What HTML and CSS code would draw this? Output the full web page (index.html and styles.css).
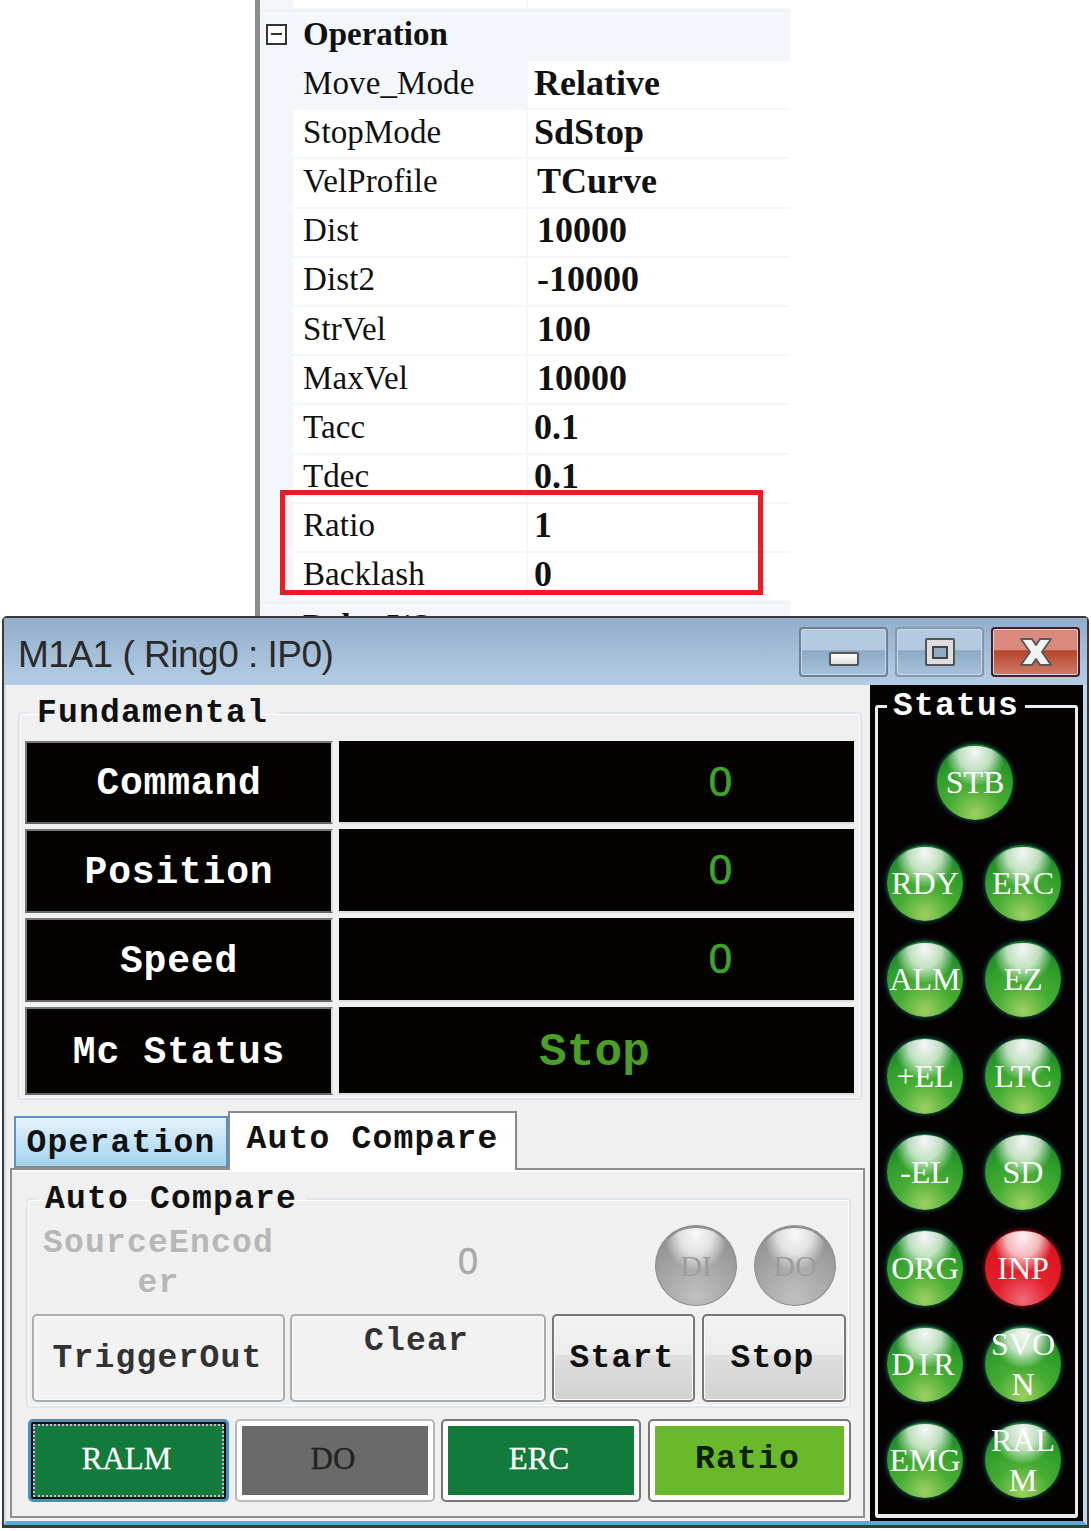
FILE: index.html
```html
<!DOCTYPE html>
<html lang="en">
<head>
<meta charset="utf-8">
<title>M1A1</title>
<link rel="stylesheet" href="styles.css">
</head>
<body>
<section class="props">
  <div class="grid">
    <div class="row stub"><span class="name"></span><span class="val"></span></div>
    <div class="row group"><span class="expander"></span><span class="gname">Operation</span></div>
    <div class="row sel"><span class="name">Move_Mode</span><span class="val">Relative</span></div>
    <div class="row"><span class="name">StopMode</span><span class="val">SdStop</span></div>
    <div class="row"><span class="name">VelProfile</span><span class="val in">TCurve</span></div>
    <div class="row"><span class="name">Dist</span><span class="val in">10000</span></div>
    <div class="row"><span class="name">Dist2</span><span class="val in">-10000</span></div>
    <div class="row"><span class="name">StrVel</span><span class="val in">100</span></div>
    <div class="row"><span class="name">MaxVel</span><span class="val in">10000</span></div>
    <div class="row"><span class="name">Tacc</span><span class="val">0.1</span></div>
    <div class="row"><span class="name">Tdec</span><span class="val">0.1</span></div>
    <div class="row"><span class="name">Ratio</span><span class="val">1</span></div>
    <div class="row"><span class="name">Backlash</span><span class="val">0</span></div>
    <div class="row group next"><span class="gname">Pulse I/O</span></div>
  </div>
  <div class="redbox"></div>
</section>

<section class="window">
  <header class="titlebar">
    <h1 class="title">M1A1 ( Ring0 : IP0)</h1>
    <div class="controls">
      <div class="ctl"><span class="min-ico"></span></div>
      <div class="ctl"><span class="max-ico"></span></div>
      <div class="ctl close">
        <svg width="36" height="32" viewBox="0 0 36 32"><path d="M3 3h11l4 6 4-6h11L24 16l9 13H22l-4-6-4 6H3l9-13z" fill="#f2f2f2" stroke="#5a5a5a" stroke-width="2" stroke-linejoin="round"/></svg>
      </div>
    </div>
  </header>
  <div class="client">
    <div class="left">
      <fieldset class="fund">
        <legend>Fundamental</legend>
        <div class="readout">
          <div class="rl">Command</div><div class="rv num">0</div>
          <div class="rl">Position</div><div class="rv num">0</div>
          <div class="rl">Speed</div><div class="rv num">0</div>
          <div class="rl">Mc Status</div><div class="rv word">Stop</div>
        </div>
      </fieldset>
      <div class="tabs">
        <div class="tab">Operation</div>
        <div class="tab active">Auto Compare</div>
      </div>
      <div class="panel">
        <fieldset class="compare">
          <legend>Auto Compare</legend>
          <div class="source">
            <div class="srclabel">SourceEncod<br>er</div>
            <div class="srcval">0</div>
            <div class="led gray big">DI</div>
            <div class="led gray big">DO</div>
          </div>
          <div class="actions">
            <div class="btn flat wide">TriggerOut</div>
            <div class="btn flat wide2 top">Clear</div>
            <div class="btn raised start">Start</div>
            <div class="btn raised stop">Stop</div>
          </div>
        </fieldset>
        <div class="toggles">
          <div class="tg focus"><span class="fill green">RALM</span></div>
          <div class="tg"><span class="fill dim">DO</span></div>
          <div class="tg dark"><span class="fill green">ERC</span></div>
          <div class="tg dark wider"><span class="fill lime">Ratio</span></div>
        </div>
      </div>
    </div>
    <div class="status">
      <fieldset class="statusbox">
        <legend>Status</legend>
        <div class="leds">
          <div class="led first">STB</div>
          <div class="led">RDY</div><div class="led">ERC</div>
          <div class="led">ALM</div><div class="led">EZ</div>
          <div class="led">+EL</div><div class="led">LTC</div>
          <div class="led">-EL</div><div class="led">SD</div>
          <div class="led">ORG</div><div class="led red">INP</div>
          <div class="led spaced">DIR</div><div class="led">SVO<br>N</div>
          <div class="led">EMG</div><div class="led">RAL<br>M</div>
        </div>
      </fieldset>
    </div>
  </div>
</section>
</body>
</html>
```
FILE: styles.css
```css
* { box-sizing: border-box; }
html, body { margin: 0; padding: 0; background: #fff; }
body { width: 1091px; height: 1531px; overflow: hidden; }

/* Property grid */
.props { position: relative; height: 616px; overflow: hidden; padding-left: 255px; }
.grid {
  width: 535px; height: 616px;
  border-left: 5px solid #8d8d8d;
  font-family: "Liberation Serif", serif; color: #111;
}
.row {
  display: flex; height: 49.2px; align-items: center;
  padding-left: 33px; background: #f3f6fb;
  font-size: 33px;
}
.stub { height: 10px; }
.stub .name, .stub .val { height: 100%; }
.name {
  width: 235px; height: 100%; flex: none; padding: 0 0 3px 10px; background: #fff;
  border-bottom: 2px solid #f3f6fb; border-right: 2px solid #f3f6fb;
  display: flex; align-items: center; letter-spacing: .1px;
}
.val {
  flex: 1; height: 100%; padding: 0 0 4px 6px; background: #fff; font-weight: bold; font-size: 36px;
  border-bottom: 2px solid #f3f6fb;
  display: flex; align-items: center;
}
.val.in { padding-left: 9px; }
.sel .name { background: #f3f6fb; }
.group { height: 51px; padding: 0 0 5px 6px; border-top: 2px solid #f0f0f0; }
.gname { font-weight: bold; font-size: 33px; }
.group.next { padding-left: 43px; }
.expander {
  width: 21px; height: 21px; border: 2px solid #333; margin-right: 16px; flex: none;
  background: linear-gradient(#333, #333) center / 11px 2px no-repeat #fff;
}
.redbox {
  position: absolute; left: 280px; top: 490px; width: 483px; height: 105px;
  border: 5px solid #ed1c24;
}

/* Window */
.window {
  margin-left: 2px; width: 1087px; height: 912px;
  border: 2px solid #3a3a3a; border-bottom-width: 3px; border-radius: 5px 5px 0 0;
  display: flex; flex-direction: column; background: #b4cce4;
  font-family: "Liberation Mono", monospace;
}
.titlebar {
  height: 67px; flex: none; display: flex; align-items: flex-start; justify-content: space-between;
  background: linear-gradient(#93aecb, #b4cde5); padding: 9px 7px 0 14px;
}
.title {
  margin: 1px 0 0; font: 400 37px/54px "Liberation Sans", sans-serif; color: #2a2a2a; letter-spacing: -.5px;
}
.controls { display: flex; gap: 7px; }
.ctl {
  width: 89px; height: 50px; border: 2px solid #6f8094; border-radius: 4px;
  box-shadow: inset 0 0 0 1px #c8d9ea;
  background: linear-gradient(#b4cae0 0 46%, #8ba8c4 47%, #a8c2dc 100%);
  display: flex; align-items: center; justify-content: center;
}
.ctl:nth-child(2) { border-color: #8397ad; }
.ctl.close {
  border-color: #4e1a24;
  background: linear-gradient(#da8a7c 0 46%, #b5442a 47%, #d07c68 100%);
}
.min-ico {
  width: 30px; height: 14px; margin-top: 14px; background: linear-gradient(#fff, #ddd);
  border: 2px solid #555; border-radius: 2px;
}
.max-ico {
  width: 30px; height: 28px; background: #ddd; border: 2px solid #555; border-radius: 2px;
  display: flex; align-items: center; justify-content: center;
}
.max-ico::after { content: ""; width: 12px; height: 9px; background: #8ea9c6; border: 2px solid #444; }

.client {
  flex: 1; display: flex; background: #f0f0f0; min-height: 0;
  border-left: 2px solid #c9dcee; border-right: 4px solid #bcdcf0; border-bottom: 4px solid #52aed2;
}
.left { width: 864px; flex: none; }

fieldset { margin: 0; padding: 0; min-width: 0; }
legend {
  padding: 0 9px; height: 30px;
  font: bold 33px/32px "Liberation Mono", monospace; letter-spacing: 1.2px; color: #111;
  white-space: pre;
}

.fund {
  width: 844px; height: 402px; margin: 13px 0 0 12px; padding: 13px 6px 0 5px;
  border: 2px solid #dfe5ea; border-radius: 4px; box-shadow: inset 0 0 0 1px #fff;
}
.fund legend { margin-left: 3px; }
.readout {
  display: grid; grid-template-columns: 308px 515px; grid-template-rows: 83px 84px 84px 88px;
  gap: 5px 6px;
}
.rl {
  background: #050202; color: #fff; border: 2px solid #777; border-right-color: #ddd; border-bottom-color: #666;
  display: flex; align-items: center; justify-content: center; padding-top: 2px;
  font-weight: bold; font-size: 38px; letter-spacing: .8px; white-space: pre;
}
.rv { background: #050202; display: flex; align-items: center; border-bottom: 2px solid #ddd; }
.num {
  color: #3fa52a; font: 400 42px "Liberation Sans", sans-serif; -webkit-text-stroke: .6px #3fa52a;
  justify-content: flex-end; padding-right: 122px;
}
.word {
  color: #4b9f24; justify-content: center; padding: 5px 4px 0 0; font: bold 46px "Liberation Mono", monospace; letter-spacing: 0.2px;
}

.tabs { height: 57px; margin-top: 11px; padding-left: 8px; display: flex; align-items: flex-end; }
.tab {
  width: 214px; height: 52px; border: 2px solid #5b8fc0; border-bottom: 2px solid #8a8a8a;
  background: linear-gradient(#e4f2fb, #a4d3ee);
  font: bold 33px/52px "Liberation Mono", monospace; letter-spacing: 1.2px; text-align: center; color: #111; white-space: pre;
}
.tab.active {
  width: 289px; height: 59px; margin-bottom: -2px; position: relative;
  border: 2px solid #8a8a8a; border-bottom: 0; background: #fff; line-height: 54px;
}

.panel { width: 855px; height: 350px; margin-left: 4px; border: 2px solid #8f8f8f; box-shadow: inset 0 2px 0 #fff; }
.compare {
  width: 825px; height: 224px; margin: 14px 0 0 14px; padding: 0 3px 0 4px;
  border: 2px solid #dfe5ea; border-radius: 4px; box-shadow: inset 0 0 0 1px #fff;
}
.compare legend { margin-left: 4px; }
.source { height: 100px; display: flex; align-items: flex-start; }
.srclabel {
  width: 233px; margin: 10px 0 0 10px; text-align: center; font: bold 33px/40px "Liberation Mono", monospace;
  letter-spacing: 1.2px; color: #b7b7b7; white-space: nowrap; flex: none;
}
.srcval {
  width: 197px; margin: 28px 0 0 183px; flex: none; font: 400 36px/40px "Liberation Sans", sans-serif; color: #a9a9a9;
  -webkit-text-stroke: .5px #a9a9a9;
}
.actions { display: flex; height: 88px; }
.btn {
  display: flex; align-items: center; justify-content: center; border-radius: 5px;
  border: 2px solid #a9adb0; background: #f2f2f2; box-shadow: inset 0 0 0 1px #fafafa;
  font: bold 33px "Liberation Mono", monospace; letter-spacing: 1.2px; color: #333; white-space: pre;
}
.wide { width: 253px; margin-right: 5px; padding-right: 2px; }
.wide2 { width: 256px; margin-right: 6px; padding-right: 3px; }
.top { align-items: flex-start; padding-top: 7px; }
.raised {
  width: 143px; border-color: #777; color: #111; padding-right: 3px;
  background: linear-gradient(#f4f4f4 0, #ececec 46%, #dedede 47%, #d2d2d2 100%);
}
.start { margin-right: 7px; }
.stop { width: 144px; }

.toggles { display: flex; gap: 6px; margin: 11px 0 0 16px; height: 83px; }
.tg {
  width: 200px; height: 100%; padding: 5px; border: 2px solid #b9b9b9; border-radius: 5px; background: #fdfdfd;
  flex: none;
}
.tg.dark { border-color: #777; }
.tg.wider { width: 203px; margin-left: 1px; }
.tg.focus { width: 201px; border: 3px solid #4a8dc4; background: #111; padding: 2px; }
.fill {
  display: flex; width: 100%; height: 100%; align-items: center; justify-content: center; padding: 0 4px 3px 0;
  font: 400 31px "Liberation Serif", serif; -webkit-text-stroke: .3px currentColor;
}
.focus .fill { outline: 2px dotted #e8a8e0; outline-offset: -2px; }
.green { background: #127a3a; color: #fff; }
.dim { background: #6a6a6a; color: #222; }
.lime {
  background: #69b92b; color: #0b2005; font-family: "Liberation Mono", monospace; letter-spacing: 1.2px;
  font-size: 33px; font-weight: bold; -webkit-text-stroke: 0;
}

.status { width: 213px; flex: none; background: #050202; padding: 6px 0 4px 5px; }
.statusbox {
  width: 203px; height: 827px; padding: 23px 0 0 9px; border: 3px solid #e8eef2; border-bottom-width: 4px;
  border-radius: 3px;
}
.statusbox legend { margin-left: 0; padding: 0 6px; color: #fff; }
.leds {
  display: grid; grid-template-columns: 76px 76px; grid-template-rows: 81px; grid-auto-rows: 76px;
  column-gap: 22px; row-gap: 20.2px;
}
.led {
  position: relative; width: 76px; height: 76px; border-radius: 50%;
  display: flex; align-items: center; justify-content: center; text-align: center;
  font: 400 32px/40px "Liberation Serif", serif; color: #fff; white-space: nowrap;
  background: radial-gradient(circle at 50% 92%, #9ed062 0, #47ad33 34%, #2f9e2c 62%, #187a2b 88%, #0f5c2c 100%);
  box-shadow: 0 0 4px 1px #14524a;
  isolation: isolate;
}
.led::before {
  content: ""; position: absolute; z-index: -1; left: 12%; top: 2%; width: 76%; height: 52%; border-radius: 50%;
  background: radial-gradient(ellipse at 50% 15%, rgba(255,255,255,.95) 0, rgba(255,255,255,.7) 40%, rgba(255,255,255,0) 75%);
}
.spaced { letter-spacing: 4px; }
.led.first { grid-column: 1 / -1; justify-self: center; transform: translateX(1px); }
.led.red {
  background: radial-gradient(circle at 50% 92%, #f06a7a 0, #e4202c 34%, #dc1520 70%, #a00e18 100%);
  box-shadow: 0 0 4px 1px #6e1218;
}
.led.gray {
  width: 82px; height: 81px; margin: 11px 0 0 0; flex: none; color: #9c9c9c; font-size: 30px;
  background: radial-gradient(circle at 50% 90%, #c0c0c0 0, #a6a6a6 45%, #8f8f8f 85%, #8a8a8a 100%);
  box-shadow: none; border: 1px solid #8e8e8e;
}
.led.gray + .led.gray { margin-left: 17px; }
```
